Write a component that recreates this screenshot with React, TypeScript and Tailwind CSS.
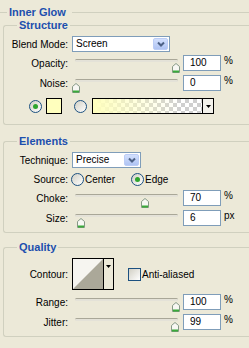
import React from "react";

function Thumb({ left }: { left: number }) {
  return (
    <svg
      className="absolute top-[4px]"
      style={{ left }}
      width="8"
      height="10"
      viewBox="0 0 8 10"
    >
      <path d="M0.5 9.5V3.5L4 0.5L7.5 3.5V9.5Z" fill="#F7F7F3" stroke="#869886" />
      <rect x="1" y="7.5" width="6" height="2" fill="#3AAA3A" />
    </svg>
  );
}

function Slider({ pos }: { pos: number }) {
  return (
    <div className="relative h-[16px] w-[108px] shrink-0">
      <div className="ml-[3px] mt-[8px] h-[3px] w-[103px] rounded-full border-t border-[#A9A798] bg-[#E4E2D8]" />
      <Thumb left={pos} />
    </div>
  );
}

function NumBox({ value }: { value: string }) {
  return (
    <div className="flex h-[16px] w-[38px] shrink-0 items-center border border-[#7F9DB9] bg-white pl-[6px] leading-none">
      {value}
    </div>
  );
}

function Label({ children }: { children: React.ReactNode }) {
  return <div className="w-[64px] shrink-0 text-right">{children}</div>;
}

function SliderRow({
  label,
  pos,
  value,
  unit,
  className,
}: {
  label: string;
  pos: number;
  value: string;
  unit: string;
  className?: string;
}) {
  return (
    <div className={`flex h-[16px] items-center ${className ?? ""}`}>
      <Label>{label}</Label>
      <div className="ml-[4px]">
        <Slider pos={pos} />
      </div>
      <div className="ml-[3px]">
        <NumBox value={value} />
      </div>
      <span className="ml-[3px] self-start leading-[12px]">{unit}</span>
    </div>
  );
}

function ComboArrow() {
  return (
    <div className="my-[1px] mr-[1px] flex w-[15px] shrink-0 items-center justify-center rounded-[2px] border border-[#BCCDF6] bg-linear-to-b from-[#D3E0FD] to-[#B0C4F3]">
      <svg width="8" height="6" viewBox="0 0 8 6">
        <path d="M1 1.5L4 4.5L7 1.5" fill="none" stroke="#4D6185" strokeWidth="2" />
      </svg>
    </div>
  );
}

function Select({ value, className }: { value: string; className: string }) {
  return (
    <div className={`flex h-[16px] shrink-0 border border-[#7F9DB9] bg-white ${className}`}>
      <div className="flex flex-1 items-center pl-[3px] leading-none">{value}</div>
      <ComboArrow />
    </div>
  );
}

function Radio({ on }: { on?: boolean }) {
  return (
    <span className="flex h-[13px] w-[13px] shrink-0 items-center justify-center rounded-full border border-[#1C5180] bg-linear-to-br from-[#D2D0C5] to-white">
      {on && <span className="h-[5px] w-[5px] rounded-full bg-[#2EA52E]" />}
    </span>
  );
}

function Group({
  title,
  className,
  children,
}: {
  title: string;
  className?: string;
  children: React.ReactNode;
}) {
  return (
    <fieldset
      className={`ml-[3px] rounded-l-[3px] border border-r-0 border-[#D0D0BF] ${className ?? ""}`}
    >
      <legend className="ml-[13px] px-[2px] text-[11px] font-bold leading-[13px] text-[#1C4FAE]">
        {title}
      </legend>
      {children}
    </fieldset>
  );
}

export default function App() {
  return (
    <div className="h-[348px] w-[249px] overflow-hidden bg-[#ECE9D8] pt-[5px] font-['Liberation_Sans',Arial,sans-serif] text-[10px] text-black">
      <div className="flex h-[14px] items-center">
        <div className="h-px w-[7px] bg-[#D0D0BF]" />
        <span className="ml-[2px] text-[11px] font-bold leading-[13px] text-[#1C4FAE]">
          Inner Glow
        </span>
        <div className="ml-[6px] h-px flex-1 bg-[#D0D0BF]" />
      </div>

      <Group title="Structure" className="pb-[10px]">
        <div className="mt-[4px] flex h-[16px] items-center">
          <Label>Blend Mode:</Label>
          <div className="ml-[4px]">
            <Select value="Screen" className="w-[98px]" />
          </div>
        </div>
        <SliderRow className="mt-[3px]" label="Opacity:" pos={100} value="100" unit="%" />
        <SliderRow className="mt-[4px]" label="Noise:" pos={0} value="0" unit="%" />
        <div className="mt-[7px] flex h-[16px] items-center">
          <div className="ml-[25px]">
            <Radio on />
          </div>
          <div className="ml-[4px] h-[16px] w-[16px] border border-black bg-[#FFFFBE]" />
          <div className="ml-[12px]">
            <Radio />
          </div>
          <div className="ml-[5px] flex h-[16px] w-[122px] border border-black">
            <div className="h-full flex-1 [background-image:conic-gradient(#cfcfcf_25%,#ffffff_0_50%,#cfcfcf_0_75%,#ffffff_0)] [background-size:8px_8px]">
              <div className="h-full w-full [background-image:linear-gradient(to_right,#FFFFBE,#FFFFBE00_80%)]" />
            </div>
            <div className="flex w-[11px] items-center justify-center border-l border-black bg-[#F3F2EC]">
              <svg width="5" height="3" viewBox="0 0 5 3">
                <path d="M0 0H5L2.5 3Z" fill="#000" />
              </svg>
            </div>
          </div>
        </div>
      </Group>

      <Group title="Elements" className="mt-[10px] pb-[6px]">
        <div className="mt-[4px] flex h-[16px] items-center">
          <Label>Technique:</Label>
          <div className="ml-[4px]">
            <Select value="Precise" className="w-[69px]" />
          </div>
        </div>
        <div className="mt-[3px] flex h-[16px] items-center">
          <Label>Source:</Label>
          <span className="ml-[3px] flex w-[60px] items-center">
            <Radio />
            <span className="ml-[1px]">Center</span>
          </span>
          <span className="flex items-center">
            <Radio on />
            <span className="ml-[1px]">Edge</span>
          </span>
        </div>
        <SliderRow className="mt-[3px]" label="Choke:" pos={69} value="70" unit="%" />
        <SliderRow className="mt-[4px]" label="Size:" pos={5} value="6" unit="px" />
      </Group>

      <Group title="Quality" className="mt-[8px] pb-[6px]">
        <div className="mt-[4px] flex h-[32px] items-center">
          <Label>Contour:</Label>
          <div className="ml-[4px] flex h-[32px] w-[42px] shrink-0 border border-black">
            <svg width="30" height="30" viewBox="0 0 30 30" className="block">
              <rect width="30" height="30" fill="#F6F5F0" />
              <path d="M0 30L30 0V30Z" fill="#ABA899" />
            </svg>
            <div className="flex flex-1 justify-center border-l border-black bg-[#ECE9D8] pt-[6px]">
              <svg width="5" height="3" viewBox="0 0 5 3">
                <path d="M0 0H5L2.5 3Z" fill="#000" />
              </svg>
            </div>
          </div>
          <span className="ml-[14px] h-[13px] w-[13px] shrink-0 border border-[#1C5180] bg-linear-to-br from-[#D2D0C5] to-white" />
          <span className="ml-[1px]">Anti-aliased</span>
        </div>
        <SliderRow className="mt-[4px]" label="Range:" pos={100} value="100" unit="%" />
        <SliderRow className="mt-[4px]" label="Jitter:" pos={99} value="99" unit="%" />
      </Group>
    </div>
  );
}
